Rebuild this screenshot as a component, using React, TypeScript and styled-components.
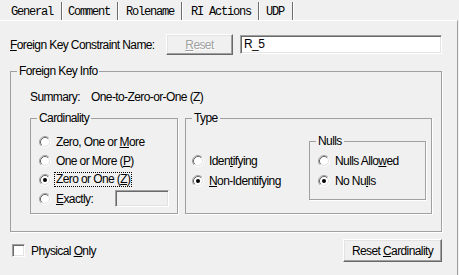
import React from 'react';
import styled, { createGlobalStyle } from 'styled-components';

const Global = createGlobalStyle`
  html, body { margin: 0; padding: 0; background: #f0f0f0; }
  body {
    font-family: "Liberation Sans", Arial, sans-serif;
    font-size: 12px;
    letter-spacing: -0.6px;
    color: #000;
  }
`;

const Window = styled.div`
  width: 459px;
  height: 275px;
  overflow: hidden;
  background: #f0f0f0;
  display: flex;
  flex-direction: column;
`;

const TabBar = styled.div`
  display: flex;
  height: 20px;
  flex: none;
`;

const Tab = styled.div<{ $w: number; $pl: number }>`
  width: ${(p) => p.$w}px;
  padding-left: ${(p) => p.$pl}px;
  height: 18px;
  margin-top: 2px;
  box-sizing: border-box;
  border-right: 1px solid #6d6d6d;
  box-shadow: 1px 0 0 #fff;
  font-family: "Liberation Mono", "Courier New", monospace;
  font-size: 12px;
  letter-spacing: -1.2px;
  line-height: 20px;
  white-space: nowrap;
`;

const Panel = styled.div`
  flex: 1;
  width: 458px;
  box-sizing: border-box;
  border-top: 1px solid #fff;
  border-right: 1px solid #a0a0a0;
  padding: 13px 15px 0 10px;
  display: flex;
  flex-direction: column;
`;

const NameRow = styled.div`
  display: flex;
  align-items: center;
  height: 21px;
`;

const NameLabel = styled.span`
  width: 156px;
  flex: none;
`;

const Button3D = styled.div<{ $w: number; $h: number; $disabled?: boolean }>`
  width: ${(p) => p.$w}px;
  height: ${(p) => p.$h}px;
  flex: none;
  box-sizing: border-box;
  border: 1px solid;
  border-color: #fff #696969 #696969 #fff;
  box-shadow: inset -1px -1px 0 #a0a0a0, inset 1px 1px 0 #e3e3e3;
  background: #f0f0f0;
  display: flex;
  align-items: center;
  justify-content: center;
  color: ${(p) => (p.$disabled ? '#a0a0a0' : '#000')};
  text-shadow: ${(p) => (p.$disabled ? '1px 1px 0 #fff' : 'none')};
`;

const TextBox = styled.div<{ $w: number; $h: number; $bg: string; $ml: number }>`
  width: ${(p) => p.$w}px;
  height: ${(p) => p.$h}px;
  margin-left: ${(p) => p.$ml}px;
  flex: none;
  box-sizing: border-box;
  border: 1px solid;
  border-color: #a0a0a0 #fff #fff #a0a0a0;
  box-shadow: inset 1px 1px 0 #696969, inset -1px -1px 0 #e3e3e3;
  background: ${(p) => p.$bg};
  padding-left: 3px;
  line-height: ${(p) => p.$h - 2}px;
`;

const Group = styled.fieldset<{ $w?: number }>`
  margin: 0;
  padding: 0;
  min-inline-size: 0;
  ${(p) => (p.$w ? `width: ${p.$w}px; flex: none;` : '')}
  box-sizing: border-box;
  border: 1px solid #a0a0a0;
  box-shadow: 1px 1px 0 #fff;
`;

const Legend = styled.legend`
  padding: 0 2px;
  margin-left: 6px;
  line-height: 14px;
`;

const FKGroup = styled(Group)`
  margin-top: 9px;
`;

const FKBody = styled.div`
  padding: 12px 9px 17px 19px;
  display: flex;
  flex-direction: column;
`;

const SummaryRow = styled.div`
  display: flex;
  line-height: 14px;
  height: 14px;
`;

const SummaryLabel = styled.span`
  width: 61px;
  flex: none;
`;

const GroupsRow = styled.div`
  display: flex;
  gap: 7px;
  margin-top: 7px;
`;

const CardBody = styled.div`
  padding: 7px 8px 5px 8px;
  display: flex;
  flex-direction: column;
`;

const OptionRow = styled.div<{ $h: number }>`
  display: flex;
  align-items: center;
  height: ${(p) => p.$h}px;
  gap: 5px;
  white-space: nowrap;
`;

const TypeBody = styled.div`
  display: flex;
  padding: 0 5px 13px 6px;
`;

const TypeColumn = styled.div`
  display: flex;
  flex-direction: column;
  margin-top: 26px;
`;

const NullsGroup = styled(Group)`
  margin-top: 9px;
  margin-left: auto;
`;

const NullsBody = styled.div`
  padding: 3px 0 8px 8px;
  display: flex;
  flex-direction: column;
`;

const Focus = styled.span`
  border: 1px dotted #000;
  padding: 0 1px;
  margin-left: -2px;
  line-height: 13px;
`;

const Mn = styled.span`
  text-decoration: underline;
  text-underline-offset: 1px;
`;

const BottomRow = styled.div`
  display: flex;
  align-items: center;
  justify-content: space-between;
  margin-top: 7px;
  height: 23px;
`;

const CheckRow = styled.div`
  display: flex;
  align-items: center;
  gap: 6px;
  padding-left: 2px;
`;

const CheckBox = styled.span`
  width: 13px;
  height: 13px;
  box-sizing: border-box;
  border: 1px solid;
  border-color: #a0a0a0 #fff #fff #a0a0a0;
  box-shadow: inset 1px 1px 0 #696969, inset -1px -1px 0 #e3e3e3;
  background: #fff;
  flex: none;
`;

const Radio: React.FC<{ checked?: boolean }> = ({ checked }) => (
  <svg width="12" height="12" viewBox="0 0 12 12" style={{ flex: 'none' }}>
    <circle cx="6" cy="6" r="4" fill="#fff" />
    <path d="M2.11 9.89 A5.5 5.5 0 0 1 9.89 2.11" fill="none" stroke="#a0a0a0" strokeWidth="1" />
    <path d="M9.89 2.11 A5.5 5.5 0 0 1 2.11 9.89" fill="none" stroke="#ffffff" strokeWidth="1" />
    <path d="M2.82 9.18 A4.5 4.5 0 0 1 9.18 2.82" fill="none" stroke="#696969" strokeWidth="1" />
    <path d="M9.18 2.82 A4.5 4.5 0 0 1 2.82 9.18" fill="none" stroke="#e3e3e3" strokeWidth="1" />
    {checked && <circle cx="6" cy="6" r="2" fill="#000" />}
  </svg>
);

const tabs = [
  { label: 'General', w: 62, pl: 11 },
  { label: 'Comment', w: 56, pl: 6 },
  { label: 'Rolename', w: 64, pl: 8 },
  { label: 'RI Actions', w: 77, pl: 9 },
  { label: 'UDP', w: 34, pl: 7 },
];

export default function App() {
  return (
    <Window>
      <Global />
      <TabBar>
        {tabs.map((t) => (
          <Tab key={t.label} $w={t.w} $pl={t.pl}>
            {t.label}
          </Tab>
        ))}
      </TabBar>
      <Panel>
        <NameRow>
          <NameLabel>
            <Mn>F</Mn>oreign Key Constraint Name:
          </NameLabel>
          <Button3D $w={67} $h={21} $disabled>
            <Mn>R</Mn>eset
          </Button3D>
          <TextBox $w={202} $h={19} $bg="#fff" $ml={7}>
            R_5
          </TextBox>
        </NameRow>

        <FKGroup>
          <Legend>Foreign Key Info</Legend>
          <FKBody>
            <SummaryRow>
              <SummaryLabel>Summary:</SummaryLabel>
              <span>One-to-Zero-or-One (Z)</span>
            </SummaryRow>
            <GroupsRow>
              <Group $w={148}>
                <Legend>Cardinality</Legend>
                <CardBody>
                  <OptionRow $h={19}>
                    <Radio />
                    <span>
                      Zero, One or <Mn>M</Mn>ore
                    </span>
                  </OptionRow>
                  <OptionRow $h={19}>
                    <Radio />
                    <span>
                      One or More (<Mn>P</Mn>)
                    </span>
                  </OptionRow>
                  <OptionRow $h={19}>
                    <Radio checked />
                    <Focus>
                      Zero or One (<Mn>Z</Mn>)
                    </Focus>
                  </OptionRow>
                  <OptionRow $h={19}>
                    <Radio />
                    <span>
                      <Mn>E</Mn>xactly:
                    </span>
                    <TextBox $w={54} $h={17} $bg="#f0f0f0" $ml={0} style={{ marginLeft: 'auto' }} />
                  </OptionRow>
                </CardBody>
              </Group>
              <Group $w={247}>
                <Legend>Type</Legend>
                <TypeBody>
                  <TypeColumn>
                    <OptionRow $h={20}>
                      <Radio />
                      <span>
                        Iden<Mn>t</Mn>ifying
                      </span>
                    </OptionRow>
                    <OptionRow $h={20}>
                      <Radio checked />
                      <span>
                        <Mn>N</Mn>on-Identifying
                      </span>
                    </OptionRow>
                  </TypeColumn>
                  <NullsGroup $w={117}>
                    <Legend>Nulls</Legend>
                    <NullsBody>
                      <OptionRow $h={20}>
                        <Radio />
                        <span>
                          Nulls Allo<Mn>w</Mn>ed
                        </span>
                      </OptionRow>
                      <OptionRow $h={20}>
                        <Radio checked />
                        <span>
                          No Nu<Mn>l</Mn>ls
                        </span>
                      </OptionRow>
                    </NullsBody>
                  </NullsGroup>
                </TypeBody>
              </Group>
            </GroupsRow>
          </FKBody>
        </FKGroup>

        <BottomRow>
          <CheckRow>
            <CheckBox />
            <span>
              Physical <Mn>O</Mn>nly
            </span>
          </CheckRow>
          <Button3D $w={99} $h={23}>
            <span>
              Reset <Mn>C</Mn>ardinality
            </span>
          </Button3D>
        </BottomRow>
      </Panel>
    </Window>
  );
}
